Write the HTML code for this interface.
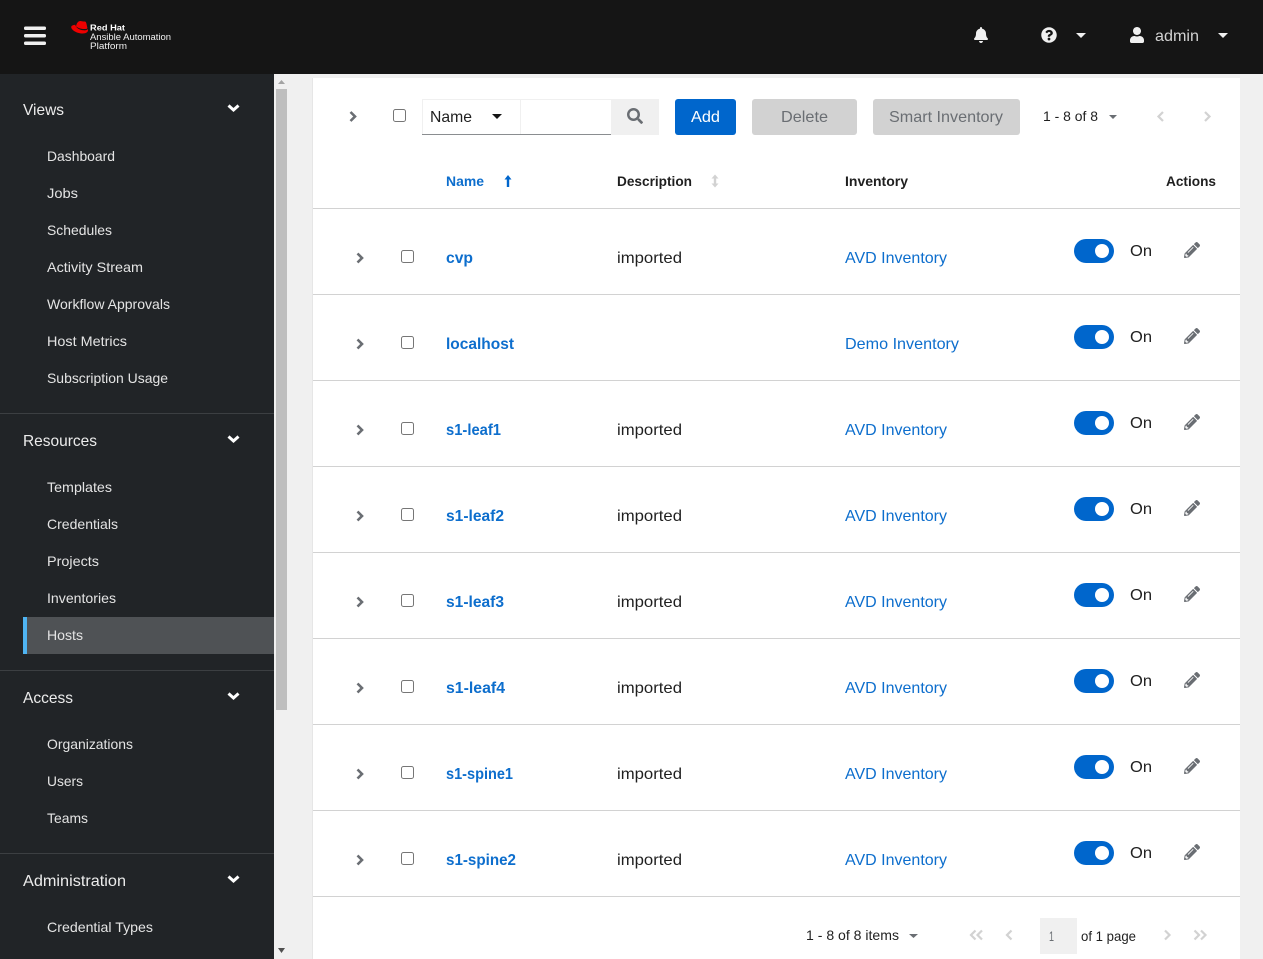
<!DOCTYPE html>
<html lang="en"><head><meta charset="utf-8"><title>Hosts</title>
<style>
html,body{margin:0;padding:0;width:1263px;height:959px;overflow:hidden;background:#f0f0f0}
svg{display:block}
text{font-family:"Liberation Sans",sans-serif;font-size:16px;fill:#1f1f1f}
.s{font-size:14px;fill:#e4e4e4}
.h{font-size:16px;fill:#ececec}
.b{font-size:14px;font-weight:bold}
.l{fill:#0d6ecd}
.lb{fill:#0d6ecd;font-weight:bold}
.p{font-size:14px}
.ch{fill:none;stroke:#6a6e73;stroke-width:2.6}
.wh{fill:none;stroke:#fff;stroke-width:3}
.dis{fill:none;stroke:#d2d2d2;stroke-width:2.2}
.cb{fill:#fff;stroke:#767676;stroke-width:1}
</style></head><body>
<svg width="1263" height="959" viewBox="0 0 1263 959" xmlns="http://www.w3.org/2000/svg">
<defs>
<path id="pen" d="M497.9 142.1l-46.1 46.1c-4.7 4.7-12.3 4.7-17 0l-111-111c-4.7-4.7-4.7-12.3 0-17l46.1-46.1c18.7-18.7 49.1-18.7 67.9 0l60.1 60.1c18.8 18.7 18.8 49.1 0 67.9zM284.2 99.8L21.6 362.4.4 483.9c-2.9 16.4 11.4 30.6 27.8 27.8l121.5-21.3 262.6-262.6c4.7-4.7 4.7-12.3 0-17l-111-111c-4.8-4.7-12.4-4.7-17.1 0zM124.1 339.9c-5.5-5.5-5.5-14.3 0-19.8l154-154c5.5-5.5 14.3-5.5 19.8 0s5.5 14.3 0 19.8l-154 154c-5.5 5.5-14.3 5.5-19.8 0zM88 424h48v36.3l-64.5 11.3-31.1-31.1L51.7 376H88v48z"/>
<g id="row">
<polyline class="ch" points="357.5,253.5 362,258 357.5,262.5"/>
<rect class="cb" x="401.5" y="250.5" width="12" height="12" rx="2"/>
<rect x="1074" y="239" width="40" height="24" rx="12" fill="#06c"/>
<circle cx="1102" cy="251" r="7" fill="#fff"/>
<text x="1130" y="256" textLength="22" lengthAdjust="spacingAndGlyphs">On</text>
<use href="#pen" transform="translate(1184 242) scale(.03125)" fill="#6a6e73"/>
</g>
</defs>

<!-- backgrounds -->
<rect width="1263" height="959" fill="#f0f0f0"/>
<rect x="312" y="78" width="1" height="881" fill="#e6e6e6"/>
<rect x="313" y="78" width="927" height="881" fill="#fff"/>

<!-- header -->
<rect width="1263" height="74" fill="#151515"/>
<rect x="24" y="26.5" width="22" height="3.5" rx="1.5" fill="#f0f0f0"/>
<rect x="24" y="34" width="22" height="3.5" rx="1.5" fill="#f0f0f0"/>
<rect x="24" y="41.5" width="22" height="3.5" rx="1.5" fill="#f0f0f0"/>
<path d="M76 26.5c.5-2.500 1.500-5.500 4.500-5.500 1 0 1.700.5 2.800.5 1.200 0 2-.2 2.500.5.700 1 1 3.500 1.500 5.500 .3 1.500-1 1.500-3 1.500-3 0-6.500-1-8-2.500z" fill="#e00"/>
<path d="M75.200 24.800c-2 .2-4 1-4 2.300 0 2.700 5.500 6.400 11.500 6.400 3 0 5.300-1.200 5.300-3.200 0-.5-.1-.9-.3-1.300-.4 1-2 1.400-4 1.300-4.500-.1-7.500-2.400-8.500-5.500z" fill="#e00"/>
<text x="90" y="30.500" style="font-size:8.5px;font-weight:bold;fill:#fff" textLength="35" lengthAdjust="spacingAndGlyphs">Red Hat</text>
<text x="90" y="40" style="font-size:9px;fill:#f0f0f0" textLength="81" lengthAdjust="spacingAndGlyphs">Ansible Automation</text>
<text x="90" y="49" style="font-size:9px;fill:#f0f0f0" textLength="37" lengthAdjust="spacingAndGlyphs">Platform</text>
<path transform="translate(974 27) scale(.03125)" fill="#f0f0f0" d="M224 512c35.32 0 63.97-28.65 63.97-64H160.03c0 35.35 28.65 64 63.97 64zm215.39-149.71c-19.32-20.76-55.47-51.99-55.47-154.29 0-77.7-54.48-139.9-127.94-155.16V32c0-17.67-14.32-32-31.98-32s-31.98 14.33-31.98 32v20.84C118.56 68.1 64.08 130.3 64.08 208c0 102.3-36.15 133.53-55.47 154.29-6 6.45-8.66 14.16-8.61 21.71.11 16.4 12.98 32 32.1 32h383.8c19.12 0 32-15.6 32.1-32 .05-7.55-2.61-15.27-8.61-21.71z"/>
<path transform="translate(1041 27) scale(.03125)" fill="#f0f0f0" d="M504 256c0 136.997-111.043 248-248 248S8 392.997 8 256C8 119.083 119.043 8 256 8s248 111.083 248 248zM262.655 90c-54.497 0-89.255 22.957-116.549 63.758-3.536 5.286-2.353 12.415 2.715 16.258l34.699 26.31c5.205 3.947 12.621 3.008 16.665-2.122 17.864-22.658 30.113-35.797 57.303-35.797 20.429 0 45.698 13.148 45.698 32.958 0 14.976-12.363 22.667-32.534 33.976C247.128 238.528 216 254.941 216 296v4c0 6.627 5.373 12 12 12h56c6.627 0 12-5.373 12-12v-1.333c0-28.462 83.186-29.647 83.186-106.667 0-58.002-60.165-102-116.531-102zM256 338c-25.365 0-46 20.635-46 46 0 25.364 20.635 46 46 46s46-20.636 46-46c0-25.365-20.635-46-46-46z"/>
<polygon points="1076,33 1086,33 1081,38" fill="#f0f0f0"/>
<path transform="translate(1130 27) scale(.03125)" fill="#f0f0f0" d="M224 256c70.7 0 128-57.3 128-128S294.7 0 224 0 96 57.3 96 128s57.3 128 128 128zm89.6 32h-16.7c-22.2 10.2-46.9 16-72.9 16s-50.6-5.800-72.900-16h-16.700C60.200 288 0 348.200 0 422.400V464c0 26.500 21.500 48 48 48h352c26.500 0 48-21.500 48-48v-41.600c0-74.200-60.200-134.400-134.400-134.400z"/>
<text x="1155" y="41" style="fill:#d2d2d2" textLength="44" lengthAdjust="spacingAndGlyphs">admin</text>
<polygon points="1218,33 1228,33 1223,38" fill="#f0f0f0"/>

<!-- sidebar -->
<rect y="74" width="274" height="885" fill="#212427"/>
<rect x="23" y="617" width="251" height="37" fill="#4f5255"/>
<rect x="23" y="617" width="4" height="37" fill="#4fb4f2"/>
<rect y="413" width="274" height="1" fill="#3c3f42"/>
<rect y="670" width="274" height="1" fill="#3c3f42"/>
<rect y="853" width="274" height="1" fill="#3c3f42"/>
<text class="h" x="23" y="115" textLength="41" lengthAdjust="spacingAndGlyphs">Views</text>
<text class="s" x="47" y="161" textLength="68" lengthAdjust="spacingAndGlyphs">Dashboard</text>
<text class="s" x="47" y="198" textLength="31" lengthAdjust="spacingAndGlyphs">Jobs</text>
<text class="s" x="47" y="235" textLength="65" lengthAdjust="spacingAndGlyphs">Schedules</text>
<text class="s" x="47" y="272" textLength="96" lengthAdjust="spacingAndGlyphs">Activity Stream</text>
<text class="s" x="47" y="309" textLength="123" lengthAdjust="spacingAndGlyphs">Workflow Approvals</text>
<text class="s" x="47" y="346" textLength="80" lengthAdjust="spacingAndGlyphs">Host Metrics</text>
<text class="s" x="47" y="383" textLength="121" lengthAdjust="spacingAndGlyphs">Subscription Usage</text>
<text class="h" x="23" y="446" textLength="74" lengthAdjust="spacingAndGlyphs">Resources</text>
<text class="s" x="47" y="492" textLength="65" lengthAdjust="spacingAndGlyphs">Templates</text>
<text class="s" x="47" y="529" textLength="71" lengthAdjust="spacingAndGlyphs">Credentials</text>
<text class="s" x="47" y="566" textLength="52" lengthAdjust="spacingAndGlyphs">Projects</text>
<text class="s" x="47" y="603" textLength="69" lengthAdjust="spacingAndGlyphs">Inventories</text>
<text class="s" x="47" y="640" textLength="36" lengthAdjust="spacingAndGlyphs">Hosts</text>
<text class="h" x="23" y="703" textLength="50" lengthAdjust="spacingAndGlyphs">Access</text>
<text class="s" x="47" y="749" textLength="86" lengthAdjust="spacingAndGlyphs">Organizations</text>
<text class="s" x="47" y="786" textLength="36" lengthAdjust="spacingAndGlyphs">Users</text>
<text class="s" x="47" y="823" textLength="41" lengthAdjust="spacingAndGlyphs">Teams</text>
<text class="h" x="23" y="886" textLength="103" lengthAdjust="spacingAndGlyphs">Administration</text>
<text class="s" x="47" y="932" textLength="106" lengthAdjust="spacingAndGlyphs">Credential Types</text>
<polyline class="wh" points="228.5,105.5 233.5,110 238.5,105.5"/>
<polyline class="wh" points="228.5,436.5 233.5,441 238.5,436.5"/>
<polyline class="wh" points="228.5,693.5 233.5,698 238.5,693.5"/>
<polyline class="wh" points="228.5,876.5 233.5,881 238.5,876.5"/>

<!-- scrollbar -->
<rect x="276" y="89" width="11" height="621" fill="#bebebe"/>
<polygon points="278,84 285,84 281.5,80" fill="#a3a3a3"/>
<polygon points="278,948 285,948 281.5,953" fill="#505050"/>

<!-- toolbar -->
<polyline class="ch" points="350.5,112 355,116.5 350.5,121"/>
<rect class="cb" x="393.5" y="109.5" width="12" height="12" rx="2"/>
<rect x="422" y="99" width="189" height="1" fill="#f0f0f0"/>
<rect x="422" y="99" width="1" height="36" fill="#f0f0f0"/>
<rect x="520" y="99" width="1" height="36" fill="#f0f0f0"/>
<rect x="422" y="134" width="189" height="1" fill="#8a8d90"/>
<text x="430" y="122" textLength="42" lengthAdjust="spacingAndGlyphs">Name</text>
<polygon points="492,114 502,114 497,119" fill="#151515"/>
<rect x="611" y="99" width="48" height="36" fill="#f0f0f0"/>
<path transform="translate(627 108) scale(.03125)" fill="#6a6e73" d="M505 442.700L405.300 343c-4.500-4.500-10.600-7-17-7H372c27.600-35.300 44-79.700 44-128C416 93.100 322.900 0 208 0S0 93.100 0 208s93.100 208 208 208c48.300 0 92.700-16.400 128-44v16.300c0 6.400 2.500 12.500 7 17l99.700 99.700c9.400 9.400 24.600 9.400 33.900 0l28.300-28.300c9.400-9.400 9.400-24.600.1-34zM208 336c-70.700 0-128-57.200-128-128 0-70.700 57.200-128 128-128 70.700 0 128 57.200 128 128 0 70.700-57.200 128-128 128z"/>
<rect x="675" y="99" width="61" height="36" rx="3" fill="#06c"/>
<text x="691" y="122" style="fill:#fff" textLength="29" lengthAdjust="spacingAndGlyphs">Add</text>
<rect x="752" y="99" width="105" height="36" rx="3" fill="#d2d2d2"/>
<text x="781" y="122" style="fill:#6a6e73" textLength="47" lengthAdjust="spacingAndGlyphs">Delete</text>
<rect x="873" y="99" width="147" height="36" rx="3" fill="#d2d2d2"/>
<text x="889" y="122" style="fill:#6a6e73" textLength="114" lengthAdjust="spacingAndGlyphs">Smart Inventory</text>
<text class="p" x="1043" y="121" textLength="55" lengthAdjust="spacingAndGlyphs">1 - 8 of 8</text>
<polygon points="1109,115 1117,115 1113,119" fill="#6a6e73"/>
<polyline class="dis" points="1163,112 1158.5,116.5 1163,121"/>
<polyline class="dis" points="1205,112 1209.5,116.5 1205,121"/>

<!-- table head -->
<text class="b l" x="446" y="186" textLength="38" lengthAdjust="spacingAndGlyphs">Name</text>
<path d="M508 175l3.500 4.500h-2.300V187h-2.400v-7.500h-2.300z" fill="#06c"/>
<text class="b" x="617" y="186" textLength="75" lengthAdjust="spacingAndGlyphs">Description</text>
<path d="M715 174.500l3.500 4h-2.300v5h2.300l-3.500 4-3.500-4h2.300v-5h-2.300z" fill="#d2d2d2"/>
<text class="b" x="845" y="186" textLength="63" lengthAdjust="spacingAndGlyphs">Inventory</text>
<text class="b" x="1166" y="186" textLength="50" lengthAdjust="spacingAndGlyphs">Actions</text>
<rect x="313" y="208" width="927" height="1" fill="#d2d2d2"/>

<!-- rows -->
<use href="#row"/>
<text class="lb" x="446" y="263" textLength="27" lengthAdjust="spacingAndGlyphs">cvp</text>
<text x="617" y="263" textLength="65" lengthAdjust="spacingAndGlyphs">imported</text>
<text class="l" x="845" y="263" textLength="102" lengthAdjust="spacingAndGlyphs">AVD Inventory</text>
<rect x="313" y="294" width="927" height="1" fill="#d2d2d2"/>

<use href="#row" y="86"/>
<text class="lb" x="446" y="349" textLength="68" lengthAdjust="spacingAndGlyphs">localhost</text>
<text class="l" x="845" y="349" textLength="114" lengthAdjust="spacingAndGlyphs">Demo Inventory</text>
<rect x="313" y="380" width="927" height="1" fill="#d2d2d2"/>

<use href="#row" y="172"/>
<text class="lb" x="446" y="435" textLength="55" lengthAdjust="spacingAndGlyphs">s1-leaf1</text>
<text x="617" y="435" textLength="65" lengthAdjust="spacingAndGlyphs">imported</text>
<text class="l" x="845" y="435" textLength="102" lengthAdjust="spacingAndGlyphs">AVD Inventory</text>
<rect x="313" y="466" width="927" height="1" fill="#d2d2d2"/>

<use href="#row" y="258"/>
<text class="lb" x="446" y="521" textLength="58" lengthAdjust="spacingAndGlyphs">s1-leaf2</text>
<text x="617" y="521" textLength="65" lengthAdjust="spacingAndGlyphs">imported</text>
<text class="l" x="845" y="521" textLength="102" lengthAdjust="spacingAndGlyphs">AVD Inventory</text>
<rect x="313" y="552" width="927" height="1" fill="#d2d2d2"/>

<use href="#row" y="344"/>
<text class="lb" x="446" y="607" textLength="58" lengthAdjust="spacingAndGlyphs">s1-leaf3</text>
<text x="617" y="607" textLength="65" lengthAdjust="spacingAndGlyphs">imported</text>
<text class="l" x="845" y="607" textLength="102" lengthAdjust="spacingAndGlyphs">AVD Inventory</text>
<rect x="313" y="638" width="927" height="1" fill="#d2d2d2"/>

<use href="#row" y="430"/>
<text class="lb" x="446" y="693" textLength="59" lengthAdjust="spacingAndGlyphs">s1-leaf4</text>
<text x="617" y="693" textLength="65" lengthAdjust="spacingAndGlyphs">imported</text>
<text class="l" x="845" y="693" textLength="102" lengthAdjust="spacingAndGlyphs">AVD Inventory</text>
<rect x="313" y="724" width="927" height="1" fill="#d2d2d2"/>

<use href="#row" y="516"/>
<text class="lb" x="446" y="779" textLength="67" lengthAdjust="spacingAndGlyphs">s1-spine1</text>
<text x="617" y="779" textLength="65" lengthAdjust="spacingAndGlyphs">imported</text>
<text class="l" x="845" y="779" textLength="102" lengthAdjust="spacingAndGlyphs">AVD Inventory</text>
<rect x="313" y="810" width="927" height="1" fill="#d2d2d2"/>

<use href="#row" y="602"/>
<text class="lb" x="446" y="865" textLength="70" lengthAdjust="spacingAndGlyphs">s1-spine2</text>
<text x="617" y="865" textLength="65" lengthAdjust="spacingAndGlyphs">imported</text>
<text class="l" x="845" y="865" textLength="102" lengthAdjust="spacingAndGlyphs">AVD Inventory</text>
<rect x="313" y="896" width="927" height="1" fill="#d2d2d2"/>

<!-- footer pagination -->
<text class="p" x="806" y="940" textLength="93" lengthAdjust="spacingAndGlyphs">1 - 8 of 8 items</text>
<polygon points="909,934 918,934 913.5,938" fill="#6a6e73"/>
<polyline class="dis" points="975.5,930.5 971,935 975.5,939.5"/>
<polyline class="dis" points="982,930.5 977.5,935 982,939.5"/>
<polyline class="dis" points="1011.5,930.5 1007,935 1011.5,939.5"/>
<rect x="1040" y="918" width="37" height="36" fill="#f0f0f0"/>
<text class="p" x="1049" y="941" style="fill:#6a6e73" textLength="5" lengthAdjust="spacingAndGlyphs">1</text>
<text class="p" x="1081" y="941" textLength="55" lengthAdjust="spacingAndGlyphs">of 1 page</text>
<polyline class="dis" points="1165,930.5 1169.5,935 1165,939.5"/>
<polyline class="dis" points="1194.5,930.5 1199,935 1194.5,939.5"/>
<polyline class="dis" points="1201,930.5 1205.5,935 1201,939.5"/>
</svg>
</body></html>
